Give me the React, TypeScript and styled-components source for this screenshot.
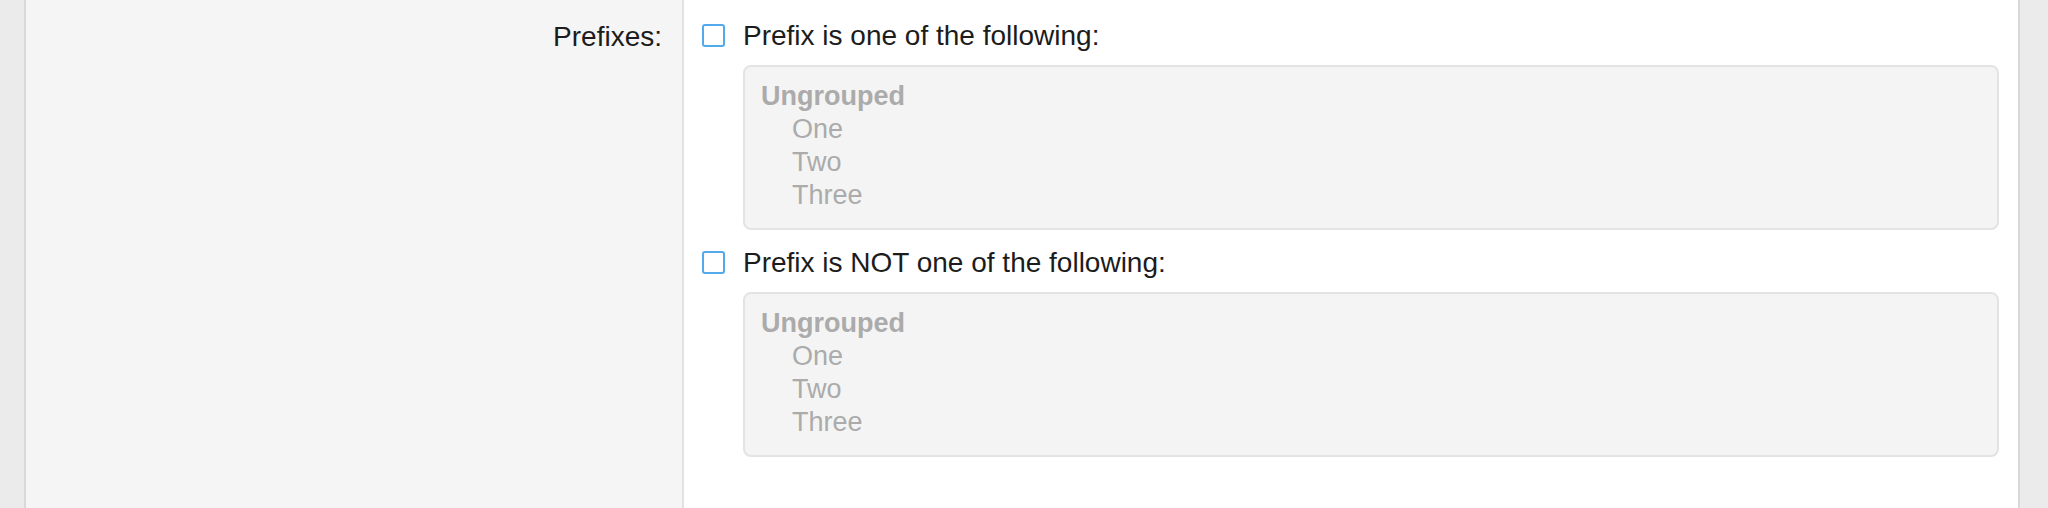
import React from "react";
import styled, { createGlobalStyle } from "styled-components";

const Global = createGlobalStyle`
  html, body {
    margin: 0;
    padding: 0;
    background: #ebebeb;
    font-family: "Liberation Sans", Arial, Helvetica, sans-serif;
  }
  #root { height: 508px; }
`;

const Page = styled.div`
  display: flex;
  height: 508px;
  padding: 0 28px 0 24px;
  overflow: hidden;
`;

const Panel = styled.div`
  flex: 1;
  display: grid;
  grid-template-columns: 658px 1fr;
  border-left: 2px solid #d9d9d9;
  border-right: 2px solid #d9d9d9;
  background: #ffffff;
`;

const LabelCol = styled.div`
  background: #f5f5f5;
  border-right: 2px solid #e2e2e2;
  padding: 20px 20px 0 0;
  text-align: right;
  font-size: 28px;
  line-height: 33px;
  color: #1c1c1c;
`;

const Content = styled.div`
  padding: 19px 19px 0 18px;
  display: flex;
  flex-direction: column;
`;

const OptionRow = styled.label`
  display: flex;
  align-items: center;
  gap: 18px;
  font-size: 28px;
  line-height: 33px;
  color: #1c1c1c;
  margin-bottom: 13px;
`;

const Check = styled.span`
  width: 23px;
  height: 23px;
  box-sizing: border-box;
  border: 2px solid #52a9ec;
  border-radius: 3px;
  background: #fff;
  flex: none;
  margin-top: -1px;
`;

const ListBox = styled.div<{ $gapAfter: number }>`
  margin-left: 41px;
  height: 165px;
  box-sizing: border-box;
  border: 2px solid #e3e3e3;
  border-radius: 8px;
  background: #f4f4f4;
  padding: 13px 16px 0 16px;
  margin-bottom: ${(p) => p.$gapAfter}px;
  font-size: 27px;
  line-height: 33px;
  color: #ababab;
`;

const GroupTitle = styled.div`
  font-weight: bold;
`;

const Item = styled.div`
  padding-left: 31px;
`;

const items = ["One", "Two", "Three"];

function Select({ gapAfter }: { gapAfter: number }) {
  return (
    <ListBox $gapAfter={gapAfter}>
      <GroupTitle>Ungrouped</GroupTitle>
      {items.map((t) => (
        <Item key={t}>{t}</Item>
      ))}
    </ListBox>
  );
}

export default function App() {
  return (
    <>
      <Global />
      <Page>
        <Panel>
          <LabelCol>Prefixes:</LabelCol>
          <Content>
            <OptionRow>
              <Check />
              Prefix is one of the following:
            </OptionRow>
            <Select gapAfter={16} />
            <OptionRow>
              <Check />
              Prefix is NOT one of the following:
            </OptionRow>
            <Select gapAfter={0} />
          </Content>
        </Panel>
      </Page>
    </>
  );
}
